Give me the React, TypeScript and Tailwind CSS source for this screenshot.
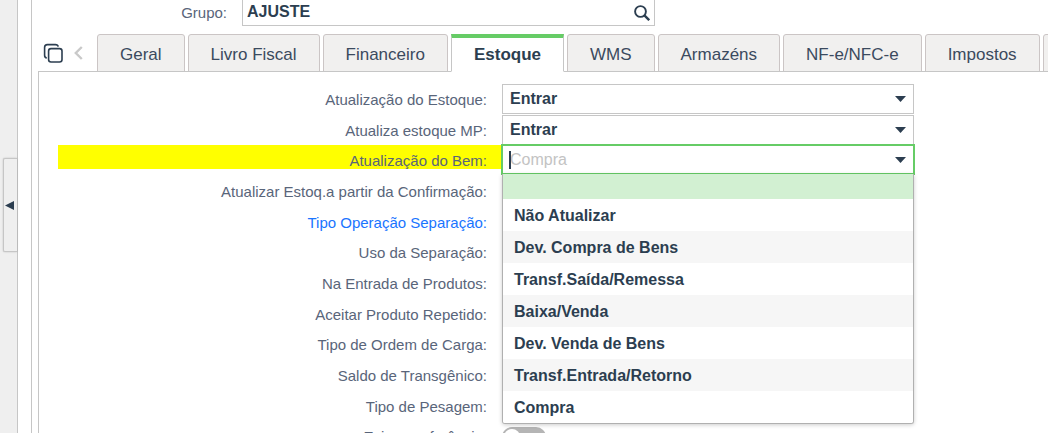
import { useState } from 'react';

const TABS = ['Geral', 'Livro Fiscal', 'Financeiro', 'Estoque', 'WMS', 'Armazéns', 'NF-e/NFC-e', 'Impostos', 'Outros'];

const OPTIONS = [
  '',
  'Não Atualizar',
  'Dev. Compra de Bens',
  'Transf.Saída/Remessa',
  'Baixa/Venda',
  'Dev. Venda de Bens',
  'Transf.Entrada/Retorno',
  'Compra',
];

const OTHER_FIELDS = [
  { label: 'Atualizar Estoq.a partir da Confirmação:' },
  { label: 'Tipo Operação Separação:', link: true },
  { label: 'Uso da Separação:' },
  { label: 'Na Entrada de Produtos:' },
  { label: 'Aceitar Produto Repetido:' },
  { label: 'Tipo de Ordem de Carga:' },
  { label: 'Saldo de Transgênico:' },
  { label: 'Tipo de Pesagem:' },
];

const ROW = 'grid grid-cols-[444fr_412fr_134fr]';
const LABEL = 'block pr-[15px] text-right text-[15px] leading-8 whitespace-nowrap text-[#59657a]';

function Caret() {
  return (
    <svg className="pointer-events-none absolute top-3 right-2 h-[6px] w-[11px]" viewBox="0 0 11 6" aria-hidden="true">
      <path d="M0 0h11L5.5 6z" fill="#2c3e50" />
    </svg>
  );
}

interface SelectRowProps {
  id: string;
  label: string;
}

function SelectRow({ id, label }: SelectRowProps) {
  return (
    <div className={ROW}>
      <label htmlFor={id} className={LABEL}>{label}</label>
      <div className="relative pb-[2px]">
        <select
          id={id}
          defaultValue="Entrar"
          className="block h-full w-full appearance-none rounded-none border border-[#c6c6c6] bg-white px-[7px] text-base font-bold text-[#2c3e50] outline-none"
        >
          <option>Entrar</option>
          <option>Sair</option>
        </select>
        <Caret />
      </div>
    </div>
  );
}

function AssetCombobox() {
  const [value, setValue] = useState('');
  const [active, setActive] = useState(0);

  return (
    <div className={ROW}>
      <div className="h-6 bg-[#ffff00]">
        <label htmlFor="bem" className={LABEL}>Atualização do Bem:</label>
      </div>
      <div className="relative h-[29px]">
        <input
          id="bem"
          role="combobox"
          aria-expanded="true"
          aria-controls="bem-list"
          placeholder="Compra"
          value={value}
          onChange={(e) => setValue(e.target.value)}
          className="block h-full w-full border border-[#66cc66] bg-white px-[7px] text-base text-[#2c3e50] shadow-[0_0_0_1px_#66cc66] outline-none placeholder:text-[#c3c3c3]"
        />
        <span className="absolute top-[6px] left-[7px] h-[18px] w-[2px] bg-[#2c3e50]" />
        <Caret />
        <ul
          id="bem-list"
          role="listbox"
          aria-label="Atualização do Bem"
          className="absolute inset-x-0 top-full z-10 overflow-hidden rounded-b-[3px] border border-t-0 border-[#b0b0b0] bg-white shadow-[0_1px_4px_rgba(0,0,0,0.2)]"
        >
          {OPTIONS.map((option, i) => (
            <li
              key={option}
              role="option"
              aria-selected={i === active}
              onMouseEnter={() => setActive(i)}
              onClick={() => setValue(option)}
              className={`px-[11px] text-base leading-[34px] font-bold text-[#2c3e50] ${option ? 'h-8' : 'h-[25px]'} ${
                i === active ? 'bg-[#d2f0d2]' : i % 2 === 0 ? 'bg-[#f6f6f6]' : 'bg-white'
              }`}
            >
              {option}
            </li>
          ))}
        </ul>
      </div>
    </div>
  );
}

export default function App() {
  const [tab, setTab] = useState('Estoque');

  return (
    <div className="flex h-screen overflow-hidden bg-white font-['Liberation_Sans',Arial,sans-serif]">
      <aside className="w-[18px] shrink-0 border-r border-[#c6c6c6] bg-[#efefef] pt-[158px] pl-[3px]">
        <button
          type="button"
          aria-label="Recolher menu"
          className="flex h-[94px] w-full items-center rounded-l-[2px] border border-r-0 border-[#c6c6c6] bg-[#efefef] shadow-[0_0_2px_rgba(0,0,0,0.2)]"
        >
          <svg className="ml-px h-[9px] w-[9px]" viewBox="0 0 9 9" aria-hidden="true">
            <path d="M9 0v9L0 4.5z" fill="#2c3e50" />
          </svg>
        </button>
      </aside>

      <main className="ml-[13px] flex min-w-0 grow flex-col border-l border-[#c6c6c6]">
        <div className="grid h-[26px] shrink-0 grid-cols-[210fr_413fr_393fr]">
          <label htmlFor="grupo" className="pr-[15px] text-right text-[15px] leading-[26px] text-[#59657a]">Grupo:</label>
          <div className="flex items-center border border-t-0 border-[#c6c6c6]">
            <input
              id="grupo"
              defaultValue="AJUSTE"
              className="h-full min-w-0 grow px-1 pb-px text-base font-bold text-[#2c3e50] outline-none"
            />
            <button type="button" aria-label="Pesquisar" className="mr-[4px]">
              <svg className="h-4 w-4" viewBox="0 0 16 16" fill="none" stroke="#2c3e50" aria-hidden="true">
                <circle cx="6.5" cy="6.5" r="5.4" strokeWidth="1.9" />
                <path d="M10.4 10.4l4.8 4.8" strokeWidth="2.4" />
              </svg>
            </button>
          </div>
        </div>

        <div className="mt-2 -mb-px ml-[6px] flex h-[38px] shrink-0">
          <button type="button" aria-label="Abas" className="ml-[5px] shrink-0">
            <svg className="h-5 w-5" viewBox="0 0 20 20" fill="none" stroke="#2c3e50" strokeWidth="1.6" aria-hidden="true">
              <rect x="5.6" y="5.6" width="13.4" height="13.4" rx="2.4" />
              <path d="M3.8 15Q1.6 14.7 1.6 12.3V4.4Q1.6 1.6 4.4 1.6H12.4Q14.8 1.6 15.2 3.6" />
            </svg>
          </button>
          <button type="button" aria-label="Aba anterior" className="ml-[11px] shrink-0">
            <svg className="h-[14px] w-[9px]" viewBox="0 0 9 14" fill="none" stroke="#c9c9c9" strokeWidth="2.4" aria-hidden="true">
              <path d="M7.8 1L1.8 7l6 6" />
            </svg>
          </button>
          <div role="tablist" className="ml-[14px] flex gap-[3px]">
            {TABS.map((name) => (
              <button
                key={name}
                type="button"
                role="tab"
                aria-selected={name === tab}
                onClick={() => setTab(name)}
                className={`shrink-0 border px-[22px] text-[17px] ${
                  name === tab
                    ? 'z-10 border-x-[#c6c6c6] border-t-4 border-t-[#66cc66] border-b-white bg-white font-bold text-[#2c3e50]'
                    : 'rounded-t-[3px] border-[#cbc5c5] bg-[#f1f0ef] pt-[3px] text-[#3b4a5e]'
                }`}
              >
                {name}
              </button>
            ))}
          </div>
        </div>

        <section role="tabpanel" aria-label={tab} className="ml-[6px] grow border-t border-l border-[#c6c6c6] pt-3 pl-[19px]">
          <div className="grid h-[368px] auto-rows-fr">
            <SelectRow id="estoque" label="Atualização do Estoque:" />
            <SelectRow id="estoque-mp" label="Atualiza estoque MP:" />
            <AssetCombobox />
            {OTHER_FIELDS.map(({ label, link }) => (
              <div key={label} className={ROW}>
                {link ? (
                  <a href="#separacao" className="block pr-[15px] text-right text-[15px] leading-8 whitespace-nowrap text-[#1a75ff]">{label}</a>
                ) : (
                  <span className={LABEL}>{label}</span>
                )}
              </div>
            ))}
            <div className={ROW}>
              <label htmlFor="conferencia" className={LABEL}>Exige conferência:</label>
              <input
                id="conferencia"
                type="checkbox"
                role="switch"
                className="mt-[6px] h-5 w-11 appearance-none rounded-full bg-[#b5b5b5] before:block before:size-4 before:translate-x-[2px] before:translate-y-[2px] before:rounded-full before:bg-white"
              />
            </div>
          </div>
        </section>
      </main>
    </div>
  );
}
